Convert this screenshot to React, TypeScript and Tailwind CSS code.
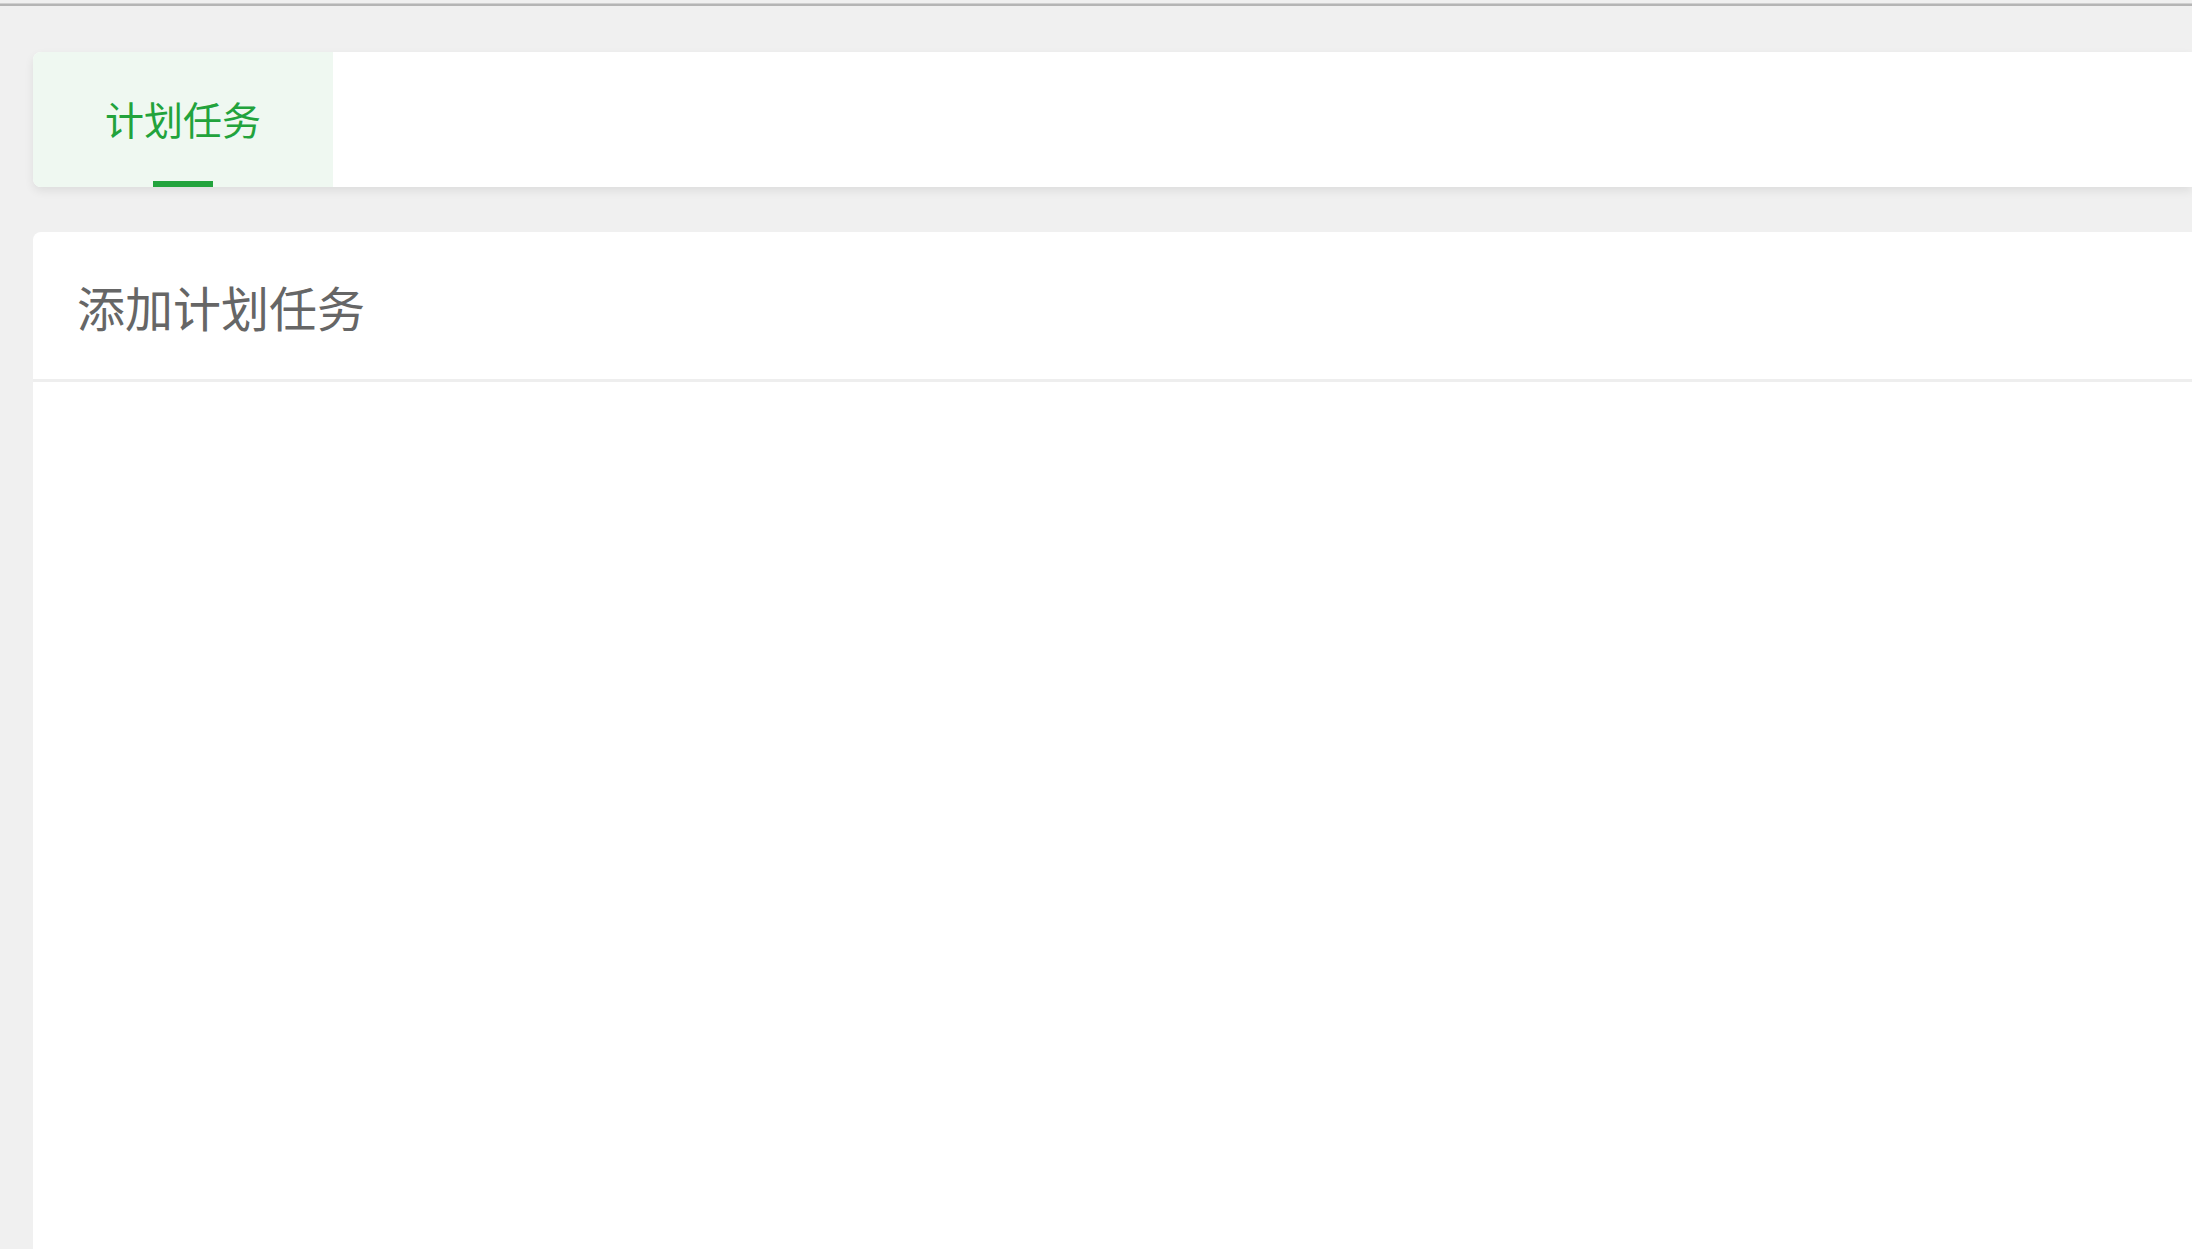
import React from 'react';

const font = { fontFamily: '"Noto Sans CJK SC", "Microsoft YaHei", sans-serif' };

const App: React.FC = () => {
  return (
    <div className="h-screen w-full bg-[#f0f0f0] overflow-hidden flex flex-col" style={font}>
      {/* top rule */}
      <div className="pt-[3px]">
        <div className="h-[1px] bg-[#d0d0d0]" />
        <div className="h-[2px] bg-[#b5b5b5]" />
      </div>

      <div className="flex-1 min-h-0 pl-[33px] pt-[46px] flex flex-col gap-[45px]">
        {/* tab bar */}
        <div className="h-[135px] shrink-0 bg-white rounded-l-[8px] shadow-[0_4px_10px_rgba(0,0,0,0.08)] flex overflow-hidden">
          <div className="relative w-[300px] h-full bg-[#eff8f1] flex items-center justify-center">
            <span className="text-[39px] leading-none text-[#22a33c] -mt-[2px]">计划任务</span>
            <div className="absolute bottom-0 left-[120px] w-[60px] h-[6px] bg-[#22a33c]" />
          </div>
        </div>

        {/* card */}
        <div className="flex-1 bg-white rounded-tl-[8px]">
          <div className="h-[150px] border-b-[3px] border-[#eeeeee] flex items-center pl-[44px]">
            <span className="text-[48px] leading-none text-[#666666]">添加计划任务</span>
          </div>
        </div>
      </div>
    </div>
  );
};

export default App;
